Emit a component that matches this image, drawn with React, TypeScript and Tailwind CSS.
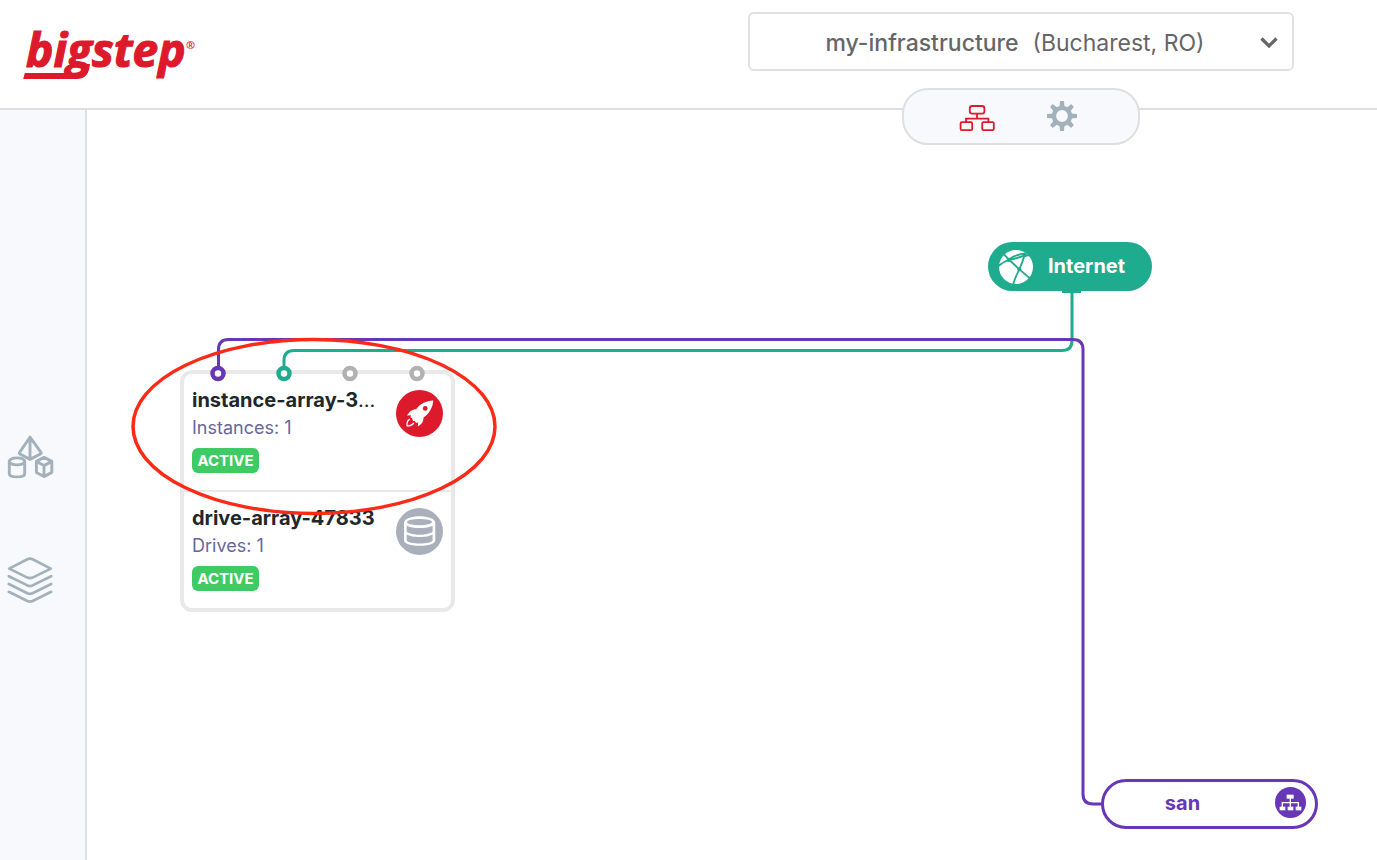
import type { ReactNode } from "react";

function Logo() {
  return (
    <a href="#home" aria-label="bigstep" className="block">
      <svg width="184" height="75" viewBox="20 12 184 75" fill="#dc1a2b" className="block">
        <text
          x="26"
          y="67"
          fontFamily="'Open Sans', sans-serif"
          fontSize="46"
          fontWeight="700"
          fontStyle="italic"
          stroke="#dc1a2b"
          strokeWidth="1.2"
        >
          bigstep
        </text>
        <text x="186" y="49" fontFamily="'Open Sans', sans-serif" fontSize="11" fontWeight="700">
          ®
        </text>
        <path d="M24.8 73H74C80 73 83 70 84 64L90 64C89 73 86 79 76 79H23.2Z" />
      </svg>
    </a>
  );
}

function TopologyIcon() {
  return (
    <svg width="36" height="28" viewBox="0 0 36 28" fill="none" stroke="#dc1a2b" strokeWidth="1.8">
      <rect x="10.8" y="2" width="14.6" height="7.6" rx="2.4" />
      <path d="M18 9.6V14.6M7 18.2V14.6H29.4V18.2" />
      <rect x="1.6" y="18.2" width="11.6" height="8" rx="1.2" />
      <rect x="23.2" y="18.2" width="11.6" height="8" rx="1.2" />
    </svg>
  );
}

function GearIcon() {
  const angles = [0, 45, 90, 135, 180, 225, 270, 315];
  return (
    <svg width="30" height="30" viewBox="-15 -15 30 30" fill="#a3b1ba">
      <circle r="8.1" fill="none" stroke="#a3b1ba" strokeWidth="4.4" />
      {angles.map((a) => (
        <path key={a} d="M-2.5 -9L-2 -14.4Q-1.900 -15 -1.4 -15H1.4Q1.900 -15 2 -14.4L2.5 -9Z" transform={`rotate(${a})`} />
      ))}
    </svg>
  );
}

function ShapesIcon() {
  return (
    <svg width="48" height="44" viewBox="0 0 48 44" fill="none" stroke="#a3b1ba" strokeWidth="2.9" strokeLinejoin="round" strokeLinecap="round">
      <path d="M23 2.2L12.6 17.4Q12 18.4 13 19L23 24.4L33.4 19Q34.6 18.4 34 17.4ZM23 2.2V24" />
      <ellipse cx="10" cy="26.4" rx="7.7" ry="3.5" />
      <path d="M2.3 26.4V38.4C2.3 43 17.7 43 17.7 38.4V26.4" />
      <path d="M37 22.4L44.8 26.4V37.4L37 41.6L29.4 37.4V26.4ZM29.4 26.4L37 30.6L44.8 26.4M37 30.6V41.6" />
    </svg>
  );
}

function LayersIcon() {
  return (
    <svg width="46" height="46" viewBox="0 0 46 46" fill="none" stroke="#a3b1ba" strokeWidth="2.7" strokeLinejoin="round" strokeLinecap="round">
      <path d="M2.2 11.6L20.4 2.2Q23 1 25.6 2.2L43.8 11.6L25.6 20.6Q23 21.8 20.4 20.6Z" />
      <path d="M1.8 19.2L20.4 28.4Q23 29.6 25.6 28.4L44.2 19.2" />
      <path d="M1.8 27L20.4 36.2Q23 37.4 25.6 36.2L44.2 27" />
      <path d="M1.8 34.8L20.4 44Q23 45.2 25.6 44L44.2 34.8" />
    </svg>
  );
}

function RocketIcon() {
  return (
    <svg width="47" height="47" viewBox="0 0 140 140" className="block">
      <circle cx="70" cy="70" r="70" fill="#dc1a2b" />
      <path
        fill="#fff"
        d="M111 31C91 32 72 40 60 57C49 57 39 64 33 76L45 75L43 81L49 85L50 92L56 92L60 98L66 96L65 109C77 103 82 94 82 82C99 70 110 51 111 31Z"
      />
      <circle cx="87" cy="55" r="7" fill="#dc1a2b" />
      <path d="M41 87C34 91 32 99 33 107C42 107 49 105 53 98" fill="none" stroke="#fff" strokeWidth="4" strokeLinejoin="round" />
    </svg>
  );
}

function DriveIcon() {
  return (
    <svg width="47" height="47" viewBox="0 0 140 140" className="block">
      <circle cx="70" cy="70" r="70" fill="#a9afbb" />
      <path d="M24 44C24 18 117 18 117 44V97C117 118 24 118 24 97Z" fill="#fff" />
      <g fill="#a9afbb">
        <ellipse cx="70" cy="42" rx="37" ry="9.500" />
        <path d="M32 53C47 62 94 62 109 53V71C94 83 47 83 32 71Z" />
        <path d="M32 79C47 89 94 89 109 79V96C105 109 36 109 32 96Z" />
      </g>
    </svg>
  );
}

function GlobeIcon() {
  return (
    <svg width="34" height="34" viewBox="0 0 102 102" className="block">
      <circle cx="51" cy="51" r="51" fill="#fff" />
      <g fill="none" stroke="#1fab8e" strokeWidth="5.500">
        <path d="M12 10L28 27L61 58L94 86" />
        <path d="M-2 48Q12 36 28 30Q50 26 76 17L92 16" />
        <path d="M28 29Q48 14 78 10M76 17Q70 38 61 58Q50 78 42 104" />
      </g>
      <g fill="#1fab8e">
        <circle cx="29" cy="30" r="6" />
        <circle cx="61" cy="58" r="6" />
        <circle cx="77" cy="15" r="7" />
      </g>
    </svg>
  );
}

function NetworkIcon() {
  return (
    <svg width="31" height="31" viewBox="0 0 93 93" className="block">
      <circle cx="46.500" cy="46.500" r="46.500" fill="#6837b6" />
      <g fill="#fff">
        <rect x="35" y="23" width="21" height="12" />
        <rect x="14" y="59" width="17" height="11" />
        <rect x="38" y="59" width="17" height="11" />
        <rect x="62" y="59" width="17" height="11" />
      </g>
      <path d="M46 34V60M22 60V47H70V60" fill="none" stroke="#fff" strokeWidth="4" />
    </svg>
  );
}

function ArrayRow({ name, detail, icon }: { name: ReactNode; detail: string; icon: ReactNode }) {
  return (
    <section className="flex items-start justify-between px-2 pt-3 pb-[17px]">
      <div>
        <h2 className="text-xl leading-7 font-bold whitespace-nowrap text-[#20272b]">{name}</h2>
        <p className="text-lg leading-7 text-[#68669f]">{detail}</p>
        <span className="mt-1.5 flex h-[25px] w-[67px] items-center justify-center rounded-md bg-[#3fcb63] pt-0.5 text-[15px] font-bold text-white">
          ACTIVE
        </span>
      </div>
      <div className="pt-1">{icon}</div>
    </section>
  );
}

function Connections() {
  return (
    <svg width="1290" height="750" viewBox="87 110 1290 750" fill="none" className="pointer-events-none absolute top-0 left-0" aria-hidden="true">
      <g strokeWidth="3">
        <path d="M1072 290V340.500Q1072 350.500 1062 350.500H294Q284 350.500 284 360.500V367" stroke="#1fab8e" />
        <path d="M1062 291.500H1081" stroke="#1fab8e" />
        <path d="M218.500 367V349.500Q218.500 339.500 228.500 339.500H1073Q1083 339.500 1083 349.500V794Q1083 804 1093 804H1103" stroke="#6837b6" />
      </g>
    </svg>
  );
}

function Overlay() {
  const ports = [
    { x: 218, color: "#6837b6" },
    { x: 284, color: "#1fab8e" },
    { x: 350, color: "#b1b1b1" },
    { x: 417, color: "#b1b1b1" },
  ];
  return (
    <svg width="1290" height="750" viewBox="87 110 1290 750" className="pointer-events-none absolute top-0 left-0" aria-hidden="true">
      {ports.map((p) => (
        <circle key={p.x} cx={p.x} cy="373.500" r="5.500" fill="#fff" stroke={p.color} strokeWidth="4.500" />
      ))}
      <ellipse cx="314" cy="426.500" rx="181" ry="87" fill="none" stroke="#fc2a17" strokeWidth="3.500" />
    </svg>
  );
}

export default function App() {
  return (
    <div className="flex min-h-screen flex-col bg-white font-['Inter','Liberation_Sans',sans-serif]">
      <header className="relative z-10 flex h-[110px] items-start justify-between border-b-2 border-[#dfdfe0] pr-[83px] pl-5">
        <div className="pt-3">
          <Logo />
        </div>
        <div className="flex w-[546px] flex-col items-center gap-[17px] pt-3">
          <div className="relative flex h-[59px] w-full shrink-0 items-center justify-center gap-3.5 rounded-md border-2 border-[#e0e0e6] bg-white pt-[3px] text-[23px] text-[#666] focus-within:border-[#a3b1ba]">
            <span className="font-medium">my-infrastructure</span>
            <span className="pr-3">(Bucharest, RO)</span>
            <svg width="18" height="12" viewBox="0 0 18 12" fill="none" stroke="#666" strokeWidth="3.2" className="absolute right-3.5">
              <path d="M1.500 1.500L9 9L16.500 1.500" />
            </svg>
            <select aria-label="Infrastructure" className="absolute inset-0 cursor-pointer opacity-0">
              <option>my-infrastructure (Bucharest, RO)</option>
            </select>
          </div>
          <nav className="flex h-[57px] w-[238px] shrink-0 items-center justify-center gap-[52px] rounded-[26px] border-2 border-[#dfdfe0] bg-[#f7f9fd] pr-1.5 pb-0.5">
            <button type="button" aria-label="Diagram" className="pt-1">
              <TopologyIcon />
            </button>
            <button type="button" aria-label="Settings">
              <GearIcon />
            </button>
          </nav>
        </div>
      </header>

      <div className="flex grow">
        <aside className="flex w-[87px] shrink-0 flex-col items-start gap-[78px] border-r-2 border-[#dfdfe0] bg-[#f7f9fd] pt-[325px] pl-[7px]">
          <button type="button" aria-label="Resources">
            <ShapesIcon />
          </button>
          <button type="button" aria-label="Layers">
            <LayersIcon />
          </button>
        </aside>

        <main className="relative min-h-[750px] grow overflow-hidden">
          <Connections />

          <div className="absolute top-[132px] left-[901px] flex h-[49px] w-[164px] items-center gap-[15px] rounded-full bg-[#1fab8e] pl-[11px] text-xl font-bold text-white">
            <GlobeIcon />
            <span className="pb-0.5">Internet</span>
          </div>

          <article className="absolute top-[260px] left-[93px] w-[275px] rounded-xl border-4 border-[#e9e9e9] bg-white">
            <ArrayRow
              name={
                <>
                  instance-array-3<span className="font-normal">…</span>
                </>
              }
              detail="Instances: 1"
              icon={<RocketIcon />}
            />
            <hr className="border-t-2 border-[#e9e9e9]" />
            <ArrayRow name="drive-array-47833" detail="Drives: 1" icon={<DriveIcon />} />
          </article>

          <div className="absolute top-[669px] left-[1014px] flex h-[50px] w-[217px] items-center rounded-full border-3 border-[#6837b6] bg-white pr-[9px] pb-[3px] text-xl font-bold text-[#6837b6]">
            <span className="grow pr-3.5 text-center">san</span>
            <NetworkIcon />
          </div>

          <Overlay />
        </main>
      </div>
    </div>
  );
}
